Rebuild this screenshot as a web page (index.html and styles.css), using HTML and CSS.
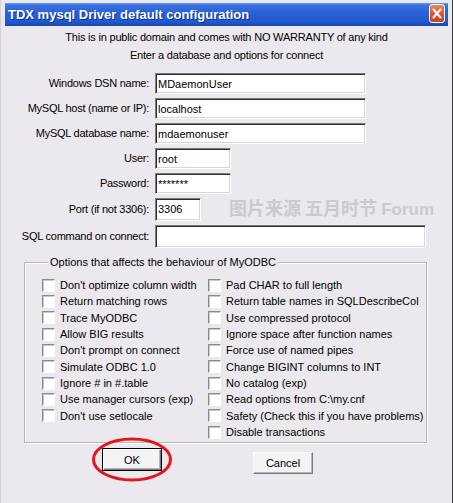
FILE: index.html
```html
<!DOCTYPE html>
<html lang="en">
<head>
  <meta charset="UTF-8" />
  <title>TDX mysql Driver default configuration</title>
  <link rel="stylesheet" href="styles.css">
</head>
<body>
  <div class="window">
    <div class="titlebar">
      <span class="title">TDX mysql Driver default configuration</span>
      <span class="close">
        <svg width="16" height="19" viewBox="0 0 16 19">
          <path d="M4.5 5.5 L11.5 13.5 M11.5 5.5 L4.5 13.5" stroke="#fff" stroke-width="2" stroke-linecap="round" fill="none"/>
        </svg>
      </span>
    </div>

    <div class="client">
      <div class="intro">
        <p>This is in public domain and comes with NO WARRANTY of any kind</p>
        <p>Enter a database and options for connect</p>
      </div>

      <div class="fields">
        <label class="field-label">Windows DSN name:</label>
        <input class="edit wide" type="text" value="MDaemonUser">

        <label class="field-label">MySQL host (name or IP):</label>
        <input class="edit wide" type="text" value="localhost">

        <label class="field-label">MySQL database name:</label>
        <input class="edit wide" type="text" value="mdaemonuser">

        <label class="field-label">User:</label>
        <input class="edit short" type="text" value="root">

        <label class="field-label">Password:</label>
        <input class="edit short" type="text" value="*******">

        <label class="field-label tall">Port (if not 3306):</label>
        <input class="edit port tall" type="text" value="3306">

        <label class="field-label tall">SQL command on connect:</label>
        <input class="edit sql tall" type="text" value="">
      </div>

      <fieldset class="options">
        <legend>Options that affects the behaviour of MyODBC</legend>
        <div class="option-cols">
          <div class="option-col">
            <label class="option"><input type="checkbox"><span>Don't optimize column width</span></label>
            <label class="option"><input type="checkbox"><span>Return matching rows</span></label>
            <label class="option"><input type="checkbox"><span>Trace MyODBC</span></label>
            <label class="option"><input type="checkbox"><span>Allow BIG results</span></label>
            <label class="option"><input type="checkbox"><span>Don't prompt on connect</span></label>
            <label class="option"><input type="checkbox"><span>Simulate ODBC 1.0</span></label>
            <label class="option"><input type="checkbox"><span>Ignore # in #.table</span></label>
            <label class="option"><input type="checkbox"><span>Use manager cursors (exp)</span></label>
            <label class="option"><input type="checkbox"><span>Don't use setlocale</span></label>
          </div>
          <div class="option-col">
            <label class="option"><input type="checkbox"><span>Pad CHAR to full length</span></label>
            <label class="option"><input type="checkbox"><span>Return table names in SQLDescribeCol</span></label>
            <label class="option"><input type="checkbox"><span>Use compressed protocol</span></label>
            <label class="option"><input type="checkbox"><span>Ignore space after function names</span></label>
            <label class="option"><input type="checkbox"><span>Force use of named pipes</span></label>
            <label class="option"><input type="checkbox"><span>Change BIGINT columns to INT</span></label>
            <label class="option"><input type="checkbox"><span>No catalog (exp)</span></label>
            <label class="option"><input type="checkbox"><span>Read options from C:\my.cnf</span></label>
            <label class="option"><input type="checkbox"><span>Safety (Check this if you have problems)</span></label>
            <label class="option"><input type="checkbox"><span>Disable transactions</span></label>
          </div>
        </div>
      </fieldset>

      <div class="buttons">
        <button class="btn btn-default">OK</button>
        <button class="btn btn-cancel">Cancel</button>
      </div>
    </div>

    <div class="watermark">图片来源 五月时节 <span class="watermark-latin">Forum</span></div>

    <svg class="highlight" width="82" height="46" viewBox="0 0 82 46">
      <ellipse cx="41" cy="22.5" rx="38.5" ry="20.5" fill="none" stroke="#e3161a" stroke-width="3"/>
    </svg>
  </div>
</body>
</html>
```

FILE: styles.css
```css
html, body {
  margin: 0;
  padding: 0;
  background: #ebe9ed;
}

.window {
  position: relative;
  width: 453px;
  height: 503px;
  box-sizing: border-box;
  padding: 3px 4px 0 4px;
  border-left: 1px solid #d2d0d6;
  border-right: 1px solid #3c3c3c;
  background: #ebe9ed;
  overflow: hidden;
  font-family: "Liberation Sans", Arial, sans-serif;
  font-size: 11px;
  color: #000;
}

/* title bar */

.titlebar {
  height: 23px;
  display: flex;
  justify-content: space-between;
  align-items: flex-start;
  padding: 0 3px 0 3px;
  background: linear-gradient(to bottom, #6a9cee 0, #3b72e0 2px, #2a63d8 40%, #2259d0 80%, #1b47ad 100%);
}

.title {
  margin-top: 4px;
  font-weight: bold;
  font-size: 13px;
  line-height: 15px;
  color: #fff;
  text-shadow: 1px 1px 0 #0f2f8c;
}

.close {
  width: 16px;
  height: 19px;
  margin-top: 1px;
  box-sizing: border-box;
  border: 1px solid #fff;
  border-radius: 3px;
  background: linear-gradient(to bottom, #ea8a66, #d9582f 50%, #c6441f);
  display: flex;
}

.close svg {
  margin: -1px;
}

/* client area */

.intro {
  padding-top: 2px;
  text-align: center;
  letter-spacing: -0.2px;
}

.intro p {
  margin: 0;
  line-height: 18px;
}

.fields {
  margin-top: 9px;
  display: grid;
  grid-template-columns: 144px 1fr;
  column-gap: 6px;
  row-gap: 4px;
}

.field-label {
  height: 21px;
  line-height: 21px;
  text-align: right;
  white-space: nowrap;
  letter-spacing: -0.25px;
}

.edit {
  height: 21px;
  box-sizing: border-box;
  margin: 0;
  padding: 0 0 0 2px;
  font-family: inherit;
  font-size: 11px;
  color: #000;
  background: #fff;
  border-style: solid;
  border-width: 1px;
  border-color: #7c7c7c #ffffff #ffffff #7c7c7c;
  box-shadow: inset 1px 1px 0 #2e2e2e, inset -1px -1px 0 #d8d6dc;
  outline: none;
}

.field-label.tall,
.edit.tall {
  height: 23px;
  line-height: 23px;
}

.edit.wide { width: 211px; }
.edit.short { width: 76px; }
.edit.port { width: 46px; }
.edit.sql { width: 271px; }

/* options group */

.options {
  margin: 8px 21px 0 19px;
  padding: 8px 0 2px 17px;
  border: 1px solid #b8b6bd;
  box-shadow: inset 1px 1px 0 #fff, 1px 1px 0 #fff;
}

.options legend {
  margin-left: 6px;
  padding: 0 2px;
  line-height: 13px;
  background: #ebe9ed;
}

.option-cols {
  display: grid;
  grid-template-columns: 166px 1fr;
}

.option-col {
  display: flex;
  flex-direction: column;
}

.option {
  height: 16.33px;
  display: flex;
  align-items: center;
  gap: 5px;
  white-space: nowrap;
}

.option input {
  appearance: none;
  margin: 0;
  width: 13px;
  height: 13px;
  box-sizing: border-box;
  background: #fff;
  border-style: solid;
  border-width: 1px;
  border-color: #8c8a90 #fdfdfd #fdfdfd #8c8a90;
  box-shadow: inset 1px 1px 0 #c9c7cd;
}

/* buttons */

.buttons {
  margin-top: 5px;
  padding-left: 97px;
  display: flex;
  align-items: flex-start;
  gap: 91px;
}

.btn {
  width: 60px;
  box-sizing: border-box;
  margin: 0;
  padding: 0;
  font-family: inherit;
  font-size: 11px;
  color: #000;
  background: #f4f3f6;
  border-style: solid;
  border-width: 1px;
}

.btn-default {
  height: 23px;
  border-color: #000;
  box-shadow: inset 1px 1px 0 #fff, inset -1px -1px 0 #7a7a7a, inset -2px -2px 0 #b4b4b8;
}

.btn-cancel {
  height: 22px;
  margin-top: 4px;
  border-color: #fff #7a7a7a #7a7a7a #fff;
  box-shadow: inset -1px -1px 0 #b4b4b8;
}

/* overlays */

.watermark {
  position: absolute;
  left: 228px;
  top: 197px;
  font-family: "Noto Sans CJK SC", "Liberation Sans", sans-serif;
  font-weight: bold;
  font-size: 18px;
  line-height: 20px;
  color: #cacacf;
  white-space: nowrap;
  pointer-events: none;
}

.watermark-latin {
  font-family: "Liberation Sans", Arial, sans-serif;
  font-size: 17px;
}

.highlight {
  position: absolute;
  left: 90px;
  top: 437px;
  pointer-events: none;
}
```
